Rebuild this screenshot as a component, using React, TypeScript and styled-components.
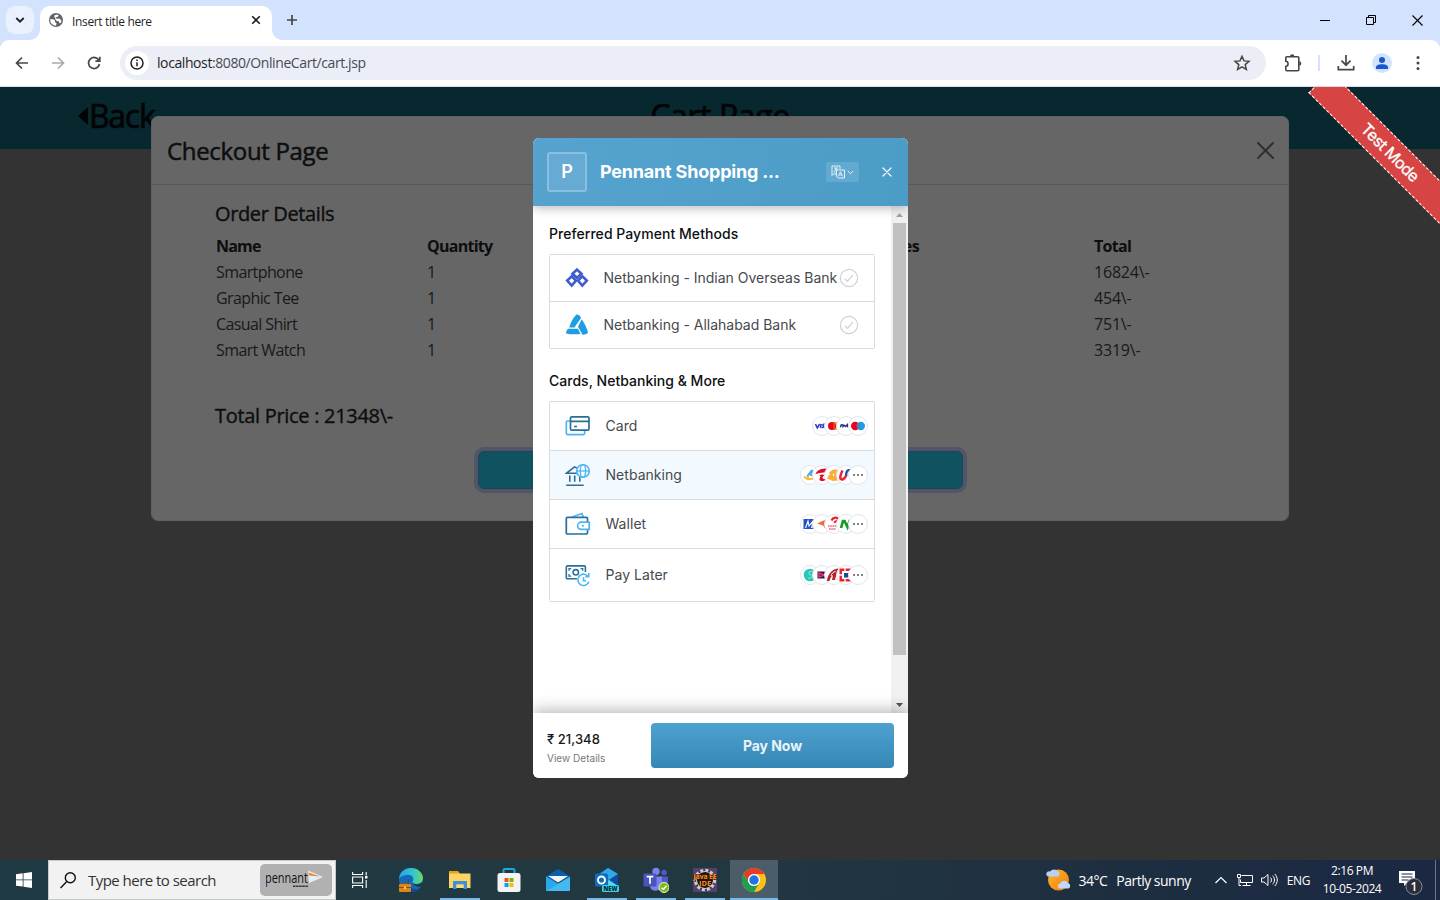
import React from "react";
import styled, { createGlobalStyle } from "styled-components";

const Global = createGlobalStyle`
  * { box-sizing: border-box; }
  html, body { margin: 0; padding: 0; overflow: hidden; }
  svg { display: block; flex: none; }
`;

const ui = `"Open Sans", "Noto Sans", sans-serif`;
const inter = `Inter, "Noto Sans", sans-serif`;

const Screen = styled.div`
  width: 1440px;
  height: 900px;
  display: flex;
  flex-direction: column;
  overflow: hidden;
  font-family: ${ui};
  background: #d3e3fd;
`;

/* Text whose tracking is tuned to the width of the system face */
const Label = styled.span<{ $size: number; $track?: number; $weight?: number; $color?: string; $stroke?: number }>`
  font-size: ${(p) => p.$size}px;
  letter-spacing: ${(p) => p.$track ?? 0}px;
  font-weight: ${(p) => p.$weight ?? 400};
  color: ${(p) => p.$color ?? "inherit"};
  -webkit-text-stroke: ${(p) => p.$stroke ?? 0}px currentColor;
  white-space: nowrap;
`;

/* ---------- Browser chrome ---------- */
const TabStrip = styled.header`
  height: 40px;
  flex: none;
  display: flex;
  align-items: flex-start;
  padding: 6px 0 0 6px;
`;
const TabSearch = styled.button`
  width: 28px;
  height: 28px;
  padding: 0;
  border: 0;
  border-radius: 9px;
  background: #e9f0fe;
  display: grid;
  place-items: center;
`;
const TabShape = styled.div`
  margin-left: 6px;
  width: 232px;
  height: 34px;
  display: flex;
  align-items: center;
  padding: 0 10px 6px 8px;
  border-radius: 10px 10px 0 0;
  background: #fff;
  color: #1f1f1f;
  position: relative;
  &::before, &::after {
    content: "";
    position: absolute;
    bottom: 0;
    width: 10px;
    height: 10px;
  }
  &::before { left: -10px; background: radial-gradient(circle at 0 0, transparent 9.5px, #fff 10px); }
  &::after { right: -10px; background: radial-gradient(circle at 100% 0, transparent 9.5px, #fff 10px); }
`;
const TabTitle = styled.div`
  flex: 1;
  margin-left: 8px;
  line-height: 16px;
  padding-top: 1px;
`;
const NewTab = styled.div`
  width: 28px;
  height: 28px;
  margin-left: 6px;
  display: grid;
  place-items: center;
`;
const WindowButtons = styled.div`
  margin-left: auto;
  display: flex;
  height: 28px;
`;
const WindowButton = styled.div`
  width: 46px;
  display: grid;
  place-items: center;
`;
const Toolbar = styled.div`
  height: 47px;
  flex: none;
  display: flex;
  align-items: center;
  background: #fff;
  border-radius: 9px 9px 0 0;
  border-bottom: 1px solid #d9dce1;
  padding-left: 4px;
`;
const ToolButton = styled.div<{ $w?: number }>`
  width: ${(p) => p.$w ?? 36}px;
  height: 34px;
  display: grid;
  place-items: center;
`;
const Omnibox = styled.div`
  margin-left: 8px;
  width: 1146px;
  height: 34px;
  border-radius: 17px;
  background: #ebeef7;
  display: flex;
  align-items: center;
  padding: 0 15px 0 5px;
`;
const SiteInfo = styled.div`
  width: 24px;
  height: 24px;
  border-radius: 50%;
  background: #fff;
  display: grid;
  place-items: center;
  margin-right: 8px;
`;
const Url = styled.div`
  flex: 1;
  line-height: 20px;
  padding-bottom: 1px;
`;
const Divider = styled.div`
  width: 2px;
  height: 16px;
  background: #d3e3fd;
  margin: 0 8px 0 6px;
`;
const Avatar = styled.div`
  width: 20px;
  height: 20px;
  border-radius: 50%;
  background: #d3e3fd;
  overflow: hidden;
  display: grid;
  place-items: center;
`;

/* ---------- Web page ---------- */
const Viewport = styled.main`
  position: relative;
  height: 773px;
  flex: none;
  background: #333;
  overflow: hidden;
`;
const PageBar = styled.div`
  height: 62px;
  background: #07282e;
  color: #030405;
  display: grid;
  grid-template-columns: 1fr auto 1fr;
  align-items: center;
  padding: 0 78px 5px;
`;
const BackLink = styled.div`
  display: flex;
  align-items: center;
`;
const CheckoutDialog = styled.section`
  position: absolute;
  left: 151px;
  top: 29px;
  width: 1138px;
  height: 405px;
  border-radius: 7px;
  background: #666;
  border: 1px solid #606060;
  color: #0d0e0f;
`;
const CheckoutHeader = styled.div`
  height: 68px;
  border-bottom: 1px solid #595959;
  padding: 0 14px 0 15px;
  display: flex;
  align-items: center;
  justify-content: space-between;
`;
const CheckoutBody = styled.div`
  padding: 17px 63px 0;
`;
const SubTitle = styled.div`
  line-height: 24px;
`;
const OrderGrid = styled.div`
  display: grid;
  grid-template-columns: 211px 449px 218px 1fr;
  grid-auto-rows: 26px;
  align-items: center;
  padding: 6px 0 0 1px;
  height: 177px;
`;
const PayButton = styled.button`
  display: block;
  width: 485px;
  height: 38px;
  margin: 22px auto 0;
  padding: 0;
  border: 1px solid #263e60;
  border-radius: 6px;
  background: #0f5260;
  box-shadow: 0 0 0 4px #4f5767;
`;
const Ribbon = styled.div`
  position: absolute;
  left: 1290px;
  top: 50px;
  width: 200px;
  height: 31px;
  transform: rotate(45deg);
  background: #d64444;
  border: 1px dashed #fff;
  display: grid;
  place-items: center;
  padding-bottom: 1px;
  font-family: ${inter};
`;

/* ---------- Payment dialog ---------- */
const PayDialog = styled.section`
  position: absolute;
  left: 533px;
  top: 51px;
  width: 375px;
  height: 640px;
  border-radius: 6px;
  background: #fff;
  overflow: hidden;
  display: flex;
  flex-direction: column;
  font-family: ${inter};
`;
const PayHeader = styled.div`
  height: 68px;
  flex: none;
  display: flex;
  align-items: center;
  padding: 0 16px 0 14px;
  background: linear-gradient(100deg, #56a3cf, #4c9cc8);
  box-shadow: 0 2px 10px rgba(0, 0, 0, 0.28);
  color: #fff;
  z-index: 1;
`;
const MerchantBadge = styled.div`
  width: 40px;
  height: 40px;
  border: 2px solid #8abfdf;
  border-radius: 3px;
  background: #66abd3;
  display: grid;
  place-items: center;
  margin-right: 13px;
  padding-bottom: 1px;
`;
const MerchantName = styled.div`
  padding-bottom: 2px;
`;
const LanguagePick = styled.div`
  width: 33px;
  height: 20px;
  border-radius: 2px;
  background: #63aad1;
  display: flex;
  align-items: center;
  justify-content: space-between;
  padding: 0 5px;
  margin-left: auto;
  margin-right: 23px;
`;
const PayMain = styled.div`
  height: 507px;
  flex: none;
  display: flex;
  position: relative;
`;
const PayContent = styled.div`
  flex: 1;
  min-width: 0;
  padding: 17px 16px 0;
`;
const SectionTitle = styled.div`
  height: 20px;
  line-height: 20px;
  color: #0d0f12;
`;
const Methods = styled.div<{ $gap: number }>`
  margin-top: 11px;
  margin-bottom: ${(p) => p.$gap}px;
  border: 1px solid #d8dadc;
  border-radius: 2px;
`;
const Method = styled.div<{ $h: number; $pad: string; $active?: boolean }>`
  height: ${(p) => p.$h}px;
  display: flex;
  align-items: center;
  padding: ${(p) => p.$pad};
  color: #45494e;
  background: ${(p) => (p.$active ? "#f3faff" : "#fff")};
  & + & { border-top: 1px solid #d8dadc; }
`;
const MethodName = styled.div`
  flex: 1;
  min-width: 0;
  white-space: nowrap;
  padding-bottom: 2px;
`;
const Stack = styled.div`
  display: flex;
`;
const Chip = styled.div`
  width: 20px;
  height: 20px;
  border-radius: 50%;
  border: 1px solid #e2e5ea;
  background: #fff;
  display: grid;
  place-items: center;
  position: relative;
  & + & { margin-left: -8px; }
`;
const ScrollTrack = styled.div`
  width: 17px;
  flex: none;
  background: #f1f1f1;
  display: flex;
  flex-direction: column;
  align-items: center;
`;
const ScrollArrow = styled.div`
  height: 17px;
  display: grid;
  place-items: center;
`;
const ScrollThumb = styled.div`
  width: 13px;
  height: 432px;
  background: #c1c1c1;
  margin-bottom: auto;
`;
const PayFooter = styled.div`
  height: 65px;
  display: flex;
  align-items: center;
  padding: 0 14px;
  background: #fff;
  box-shadow: 0 -3px 14px rgba(30, 45, 35, 0.32);
  z-index: 1;
`;
const Amount = styled.div`
  width: 104px;
  display: flex;
  flex-direction: column;
  padding-top: 2px;
`;
const AmountLine = styled.div<{ $lh: number }>`
  line-height: ${(p) => p.$lh}px;
`;
const PayNow = styled.button`
  width: 243px;
  height: 45px;
  border: 0;
  border-radius: 4px;
  background: linear-gradient(#4fa1cf, #3588b5);
  font-family: ${inter};
  display: grid;
  place-items: center;
`;

/* ---------- Taskbar ---------- */
const Taskbar = styled.footer`
  height: 40px;
  flex: none;
  display: flex;
  background: linear-gradient(90deg, #1f3a42, #223841 50%, #1f3040 72%, #1a2843);
  color: #fff;
`;
const Slot = styled.div<{ $w?: number; $open?: boolean; $active?: boolean }>`
  width: ${(p) => p.$w ?? 48}px;
  height: 40px;
  margin-right: 1px;
  display: grid;
  place-items: center;
  position: relative;
  background: ${(p) => (p.$active ? "#4b5d68" : "transparent")};
  &::after {
    content: "";
    position: absolute;
    bottom: 0;
    height: 2px;
    left: ${(p) => (p.$active ? 0 : 4)}px;
    right: ${(p) => (p.$active ? 0 : 4)}px;
    background: ${(p) => (p.$open || p.$active ? "#76b9ed" : "transparent")};
  }
`;
const StartButton = styled(Slot)`
  margin-right: 0;
`;
const SearchBox = styled.div`
  width: 288px;
  border: 1px solid #c5c9ca;
  background: #f2f2f2;
  display: flex;
  align-items: center;
  padding: 0 3px 0 11px;
`;
const SearchText = styled.div`
  flex: 1;
  margin-left: 11px;
`;
const BrandPill = styled.div`
  width: 72px;
  height: 32px;
  border-radius: 5px;
  background: #b1b1b1;
  display: grid;
  place-items: center;
`;
const Tray = styled.div`
  margin-left: auto;
  display: flex;
  align-items: center;
`;
const Gap = styled.div<{ $w: number }>`
  width: ${(p) => p.$w}px;
  flex: none;
`;
const Clock = styled.div`
  width: 60px;
  display: flex;
  flex-direction: column;
  align-items: center;
  line-height: 18px;
`;
const DesktopPeek = styled.div`
  width: 5px;
  height: 40px;
  border-left: 1px solid #6d7686;
`;

/* ---------- Drawings ---------- */
const Cross = ({ s, w, c }: { s: number; w: number; c: string }) => (
  <svg width={s} height={s} viewBox={`0 0 ${s} ${s}`} stroke={c} strokeWidth={w} strokeLinecap="round">
    <path d={`M1 1L${s - 1} ${s - 1}M${s - 1} 1L1 ${s - 1}`} />
  </svg>
);

const Check = () => (
  <svg width="20" height="20" viewBox="0 0 20 20" fill="none" stroke="#cfd1d3" strokeWidth="1.2">
    <circle cx="10" cy="10" r="8.6" />
    <path d="M5.8 10.6l2.6 2.8 5.6-6.6" />
  </svg>
);

const Globe = () => (
  <svg width="16" height="16" viewBox="0 0 16 16">
    <circle cx="8" cy="8" r="7" fill="#5f6368" />
    <path d="M2.3 7l3 .2 1.700 1.400v1.700l1.500.7-.4 2.700A5.700 5.700 0 0 1 2.300 7zM6.500 3.200l2.800-.8 1.300.9-.6 1.400-1.700.2-.4 1.300 1.400.6 2.200-.3 1.500 1.400.5 1.600-1.200 1.700-1-.3-.6-1.700-2.500-.5-1-1.600.3-1.300-1.300-.6z" fill="#fff" />
  </svg>
);

const OverseasLogo = () => (
  <svg width="24" height="24" viewBox="0 0 24 24" fill="none" stroke="#3e5cd0" strokeWidth="2.600">
    <path d="M12 3.600l4.500 4.200-4.500 4-4.500-4z" />
    <path d="M6.700 10.300l4.300 4.200-4.300 5-4.500-5z" />
    <path d="M17.300 10.300l4.500 4.200-4.500 5-4.300-5z" />
  </svg>
);
const AllahabadLogo = () => (
  <svg width="24" height="24" viewBox="0 0 24 24" fill="#1f9de2">
    <path d="M11.500 1.500c2.500 0 3.800 1.400 4.500 3.600l-6.600 9.500H4.200C5.500 10.500 7.500 5 11.500 1.500z" />
    <path d="M16.700 6.200c3 4 5.500 9.300 6.300 13.500-1.500 1.400-3.500 2-5.400 2l-4.600-8z" />
    <path d="M3 15.700h10l2.500 5.200c-4.500.7-10 .7-14.500-.5.1-2 .9-3.600 2-4.700z" />
  </svg>
);

const dark = "#2b6f97";
const light = "#4db5f5";
const CardIcon = () => (
  <svg width="26" height="24" viewBox="0 0 26 24" fill="none" strokeWidth="1.700">
    <path d="M5 7H2.600A1.300 1.300 0 0 0 1.300 8.300v11a1.300 1.300 0 0 0 1.300 1.300h15.800a1.300 1.300 0 0 0 1.300-1.300V17" stroke={light} />
    <rect x="5.500" y="2.800" width="18.500" height="13.400" rx="1.300" stroke={dark} />
    <path d="M5.500 7.300H24M9 12.500h3" stroke={dark} />
  </svg>
);
const BankIcon = () => (
  <svg width="26" height="24" viewBox="0 0 26 24" fill="none" strokeWidth="1.600">
    <path d="M12 5.100L9.600 3.900 1.300 10.300h11.500M4.800 12.500v6.300M9.700 12.500v6.300M14.800 13.800v5M1.200 22.200h17.500" stroke={dark} />
    <circle cx="18" cy="8" r="6.300" stroke={light} />
    <ellipse cx="18" cy="8" rx="2.700" ry="6.300" stroke={light} strokeWidth="1.300" />
    <path d="M11.700 8h12.600" stroke={light} strokeWidth="1.300" />
  </svg>
);
const WalletIcon = () => (
  <svg width="26" height="24" viewBox="0 0 26 24" fill="none" strokeWidth="1.700">
    <path d="M7 5l10-3.500 1.200 3.500" stroke={light} />
    <path d="M22.500 10V6.500a1.200 1.200 0 0 0-1.200-1.200H2.500a1.200 1.200 0 0 0-1.200 1.200v14.200A1.200 1.200 0 0 0 2.500 22h18.800a1.200 1.200 0 0 0 1.200-1.200v-3" stroke={dark} />
    <path d="M24.200 10.200h-8a3.600 3.600 0 0 0 0 7.200h8z" stroke={light} fill="#fff" />
    <path d="M17 13.800h1.800" stroke={light} />
  </svg>
);
const LaterIcon = () => (
  <svg width="26" height="24" viewBox="0 0 26 24" fill="none" strokeWidth="1.600">
    <path d="M12 15.800H2.500A1.200 1.200 0 0 1 1.300 14.600V4.100a1.200 1.200 0 0 1 1.200-1.200h16.700a1.200 1.200 0 0 1 1.200 1.200V9" stroke={dark} />
    <circle cx="10.800" cy="9.300" r="2.700" stroke={dark} />
    <path d="M4 7.700V5.600h2.200M15.500 5.600h2.200v2.100M4 11v2.100h2.200" stroke={dark} strokeWidth="1.300" />
    <path d="M23.600 14.200a5.700 5.700 0 1 0 .3 4.600M20.300 13.600h3.500v-3.500M18.500 14.300v3.400h2.500" stroke={light} />
  </svg>
);

const Logo = ({ children }: { children: React.ReactNode }) => (
  <svg width="16" height="16" viewBox="0 0 16 16">{children}</svg>
);
const logos: Record<string, React.ReactNode> = {
  visa: <Logo><path d="M1.500 6l1.800 4L5.700 6M7.200 6l-.7 4M10.800 6.300c-2-.6-2.500.7-1.400 1.500s.3 2.200-1.600 1.700M10.500 10l2.200-3.800.8 3.800" stroke="#2536c4" strokeWidth="1.500" fill="none" /></Logo>,
  master: <Logo><circle cx="10.500" cy="8" r="4" fill="#f79e1b" /><circle cx="6" cy="8" r="4" fill="#eb001b" /><path d="M8.200 4.700v6.600" stroke="#f0501a" strokeWidth="1.500" /></Logo>,
  rupay: <Logo><path d="M2.500 9.300l.8-2.500 2 .2-.2 1.500 1.300-1 1.300 1 1.700-2 .4 2 2-1.700 1 1.500 2-1.500" stroke="#28277e" strokeWidth="1.400" fill="none" /></Logo>,
  maestro: <Logo><circle cx="5.200" cy="8" r="4.200" fill="#eb001b" /><circle cx="10.800" cy="8" r="4.200" fill="#1a9fe0" /><path d="M8 4.900a4.200 4.200 0 0 1 0 6.200 4.200 4.200 0 0 1 0-6.200z" fill="#7866b8" /></Logo>,
  sbi: <Logo><path d="M5 9.500L10 3l-1.500 5 3.500 1M10 3l1 3" stroke="#45a8dd" strokeWidth="1.700" fill="none" /><path d="M2 9.700l4 2.600 7-1M6 12.300V9" stroke="#f6b52e" strokeWidth="1.700" fill="none" /></Logo>,
  axis: <Logo><path d="M1.500 7.200C2.500 4 6 1.600 11 1.500c4 0 3 3.500-1 4-3 .4-6 .7-8.500 1.700zM5 9c1.500-2 5-2 5-.8 0 1-2 1.500-1.500 2.500.5 1.300 2 1.600 4 1.500-2 2-6 2.500-7 .5C5 11 8 9 5 9z" fill="#df0a28" /></Logo>,
  gold: <Logo><path d="M3 5.500l4-3 5 .3v8.500l2 .2-1 1.800-6 .7-6-2.500 2-3.500 1-.5zM8 6.200L6.500 8l1.800 1.200z" fill="#faad3a" fillRule="evenodd" /></Logo>,
  union: <Logo><path d="M4.500 3.500c-2 4-3.500 8.500-.5 9 2.500 0 3.500-2.500 4.500-4.500" stroke="#e4253a" strokeWidth="2.500" fill="none" /><path d="M12.500 3.300c-3-.6-4.200.7-4.500 5.200" stroke="#18589d" strokeWidth="2.500" fill="none" /></Logo>,
  dots: <Logo><path d="M3.300 7.300h1.500v1.500H3.300zM7.300 7.300h1.500v1.500H7.300zM11.300 7.300h1.500v1.500h-1.500z" fill="#222" /></Logo>,
  mobi: <Logo><path d="M1.500 3h12v10h-12z" fill="#2450c7" /><path d="M3.500 12l2.500-7 1 5 4-5-1.500 7M12.500 5l-1.500 7" stroke="#fff" strokeWidth="1.100" fill="none" /></Logo>,
  pay: <Logo><path d="M3 7.500L13 3l-1.500 10L9 9.500z" fill="#f26a35" /></Logo>,
  airtel: <Logo><path d="M5.500 4.500C7 1 12 1 12 3.200c0 2-3 2-3.700 3.600" stroke="#ed1c35" strokeWidth="2.200" fill="none" /><path d="M2 10h10M3 13h7" stroke="#ea6b7b" strokeWidth="1.700" strokeDasharray="1.700 .5" /></Logo>,
  free: <Logo><path d="M3 12l2-7h1.500l3 6 2.500-7" stroke="#179b25" strokeWidth="2.700" fill="none" /></Logo>,
  simpl: <Logo><circle cx="8" cy="8" r="6.300" fill="#28c6b6" /><path d="M10.500 4.500C6.500 3.800 5.500 6.500 8 7.600s2.500 3.500-2 3.700" stroke="#bdeee8" strokeWidth=".8" fill="none" /></Logo>,
  lazy: <Logo><path d="M3.500 4.500h8.500v7H3.500z" fill="#29174a" /><path d="M5 6v4l5.500-2z" stroke="#f23675" strokeWidth="1.500" fill="none" /></Logo>,
  icici: <Logo><path d="M1 14C1.500 8 5 2.500 12 1.500l1.500 1.500c-2 3-4 6-4.500 10H6l1-5c-2 1.500-3 4-3.500 6z" fill="#b5242c" /><path d="M9.500 4.500c-2 .3-4 2-4.500 4.500" stroke="#fff" strokeWidth="1" fill="none" /><path d="M13.500 4l-2 9" stroke="#ee7b2e" strokeWidth="1.600" /></Logo>,
  hdfc: <Logo><path d="M1.500 1.500h13v13h-13z" fill="#ed232a" /><path d="M4 4h8v8H4z" fill="#fff" /><path d="M7 1v3M7 12v3M1 8h3M12 8h3" stroke="#fff" strokeWidth="1.300" /><path d="M6 6h4.500v4.500H6z" fill="#174c92" /></Logo>,
};

const Start = () => (
  <svg width="16" height="16" viewBox="0 0 16 16" fill="#fff">
    <path d="M0 2.300l6.700-1v6.200H0zM7.500 1.200L16 0v7.500H7.500zM0 8.300h6.700v6.300L0 13.700zM7.500 8.300H16V16l-8.500-1.200z" />
  </svg>
);
const Magnifier = () => (
  <svg width="17" height="17" viewBox="0 0 17 17" fill="none" stroke="#111" strokeWidth="1.400">
    <circle cx="10.300" cy="5.800" r="5" /><path d="M6.800 9.500L.5 16" />
  </svg>
);
const Pennant = () => (
  <svg width="60" height="22" viewBox="0 0 60 22">
    <path d="M42 1.500l15 6.500-14 6z" fill="#e0f0f4" />
    <path d="M42.500 3.500L54 7.500 43 6.500z" fill="#f58220" />
    <text x="-1" y="14" fontFamily="Open Sans, sans-serif" fontSize="14.500" textLength="43" lengthAdjust="spacingAndGlyphs" fill="#111">pennant</text>
    <path d="M27 17.200h15" stroke="#333" strokeWidth="1.500" strokeDasharray="2.500 .6" />
  </svg>
);
const TaskView = () => (
  <svg width="16" height="16" viewBox="0 0 16 16" fill="none" stroke="#fff" strokeWidth="1.100">
    <path d="M.6 0v2.500h10V0M.6 16v-2.500h10V16M.6 5h10v6H.6zM14.200 0v3.500M14.200 8v8" /><path d="M13 4h2.500v2.500H13z" fill="#fff" stroke="none" />
  </svg>
);
const Edge = () => (
  <svg width="26" height="26" viewBox="0 0 26 26">
    <defs>
      <linearGradient id="edgeTop" x1="0" x2="1"><stop offset="0" stopColor="#25a3e8" /><stop offset=".6" stopColor="#37c5ce" /><stop offset="1" stopColor="#6bdc5b" /></linearGradient>
    </defs>
    <circle cx="13" cy="13" r="12" fill="#1669b6" />
    <path d="M1 12C1.500 5 6.500 1 13 1c7 0 12 5 12 10 0 4.500-4 6-7 6-2.500 0-3.800-.8-3.500-2 2.500-4-1-8-6-7C5 8.300 2.500 9.500 1 12z" fill="url(#edgeTop)" />
    <path d="M12 11c-3 4-1 10 5 11 2.500.4 4.500-.5 6-2-2 3-5.500 5-9.500 5C8 25 6 17 12 11z" fill="#0d4f97" />
    <path d="M14.500 15.500c1 2 5.500 2.300 8.500.5l2-1-.5 3.500c-3 2.500-9.500 1-10-3z" fill="#213a42" />
    <rect x="1" y="17" width="12" height="8" rx="1" fill="#d9861c" /><path d="M1 20.500h12" stroke="#8e4c10" /><path d="M4.500 17v-1.500h5V17" fill="none" stroke="#8e4c10" /><path d="M6 19.500h2v2.500H6z" fill="#ffd34d" />
  </svg>
);
const Explorer = () => (
  <svg width="22" height="20" viewBox="0 0 22 20">
    <path d="M0 1h9l2 2.500V8H0z" fill="#e5a50e" /><path d="M0 3.500h21.500V18H0z" fill="#fdd367" />
    <path d="M4 19v-8h14v8h-3.500v-4.500h-7V19z" fill="#3b93d6" /><path d="M7.500 14.500h7V18h-7z" fill="#fcd97c" />
  </svg>
);
const Store = () => (
  <svg width="24" height="24" viewBox="0 0 24 24">
    <path d="M6.500 6V2.500A1.500 1.500 0 0 1 8 1h8a1.500 1.500 0 0 1 1.500 1.500V6" fill="none" stroke="#1ea7e1" strokeWidth="2" />
    <rect x=".5" y="5" width="23" height="19" rx="2.500" fill="#f3f3f3" />
    <path d="M7.500 10h4v4h-4z" fill="#f25022" /><path d="M12.500 10h4v4h-4z" fill="#7fba00" /><path d="M7.500 15h4v4h-4z" fill="#00a4ef" /><path d="M12.500 15h4v4h-4z" fill="#ffb900" />
  </svg>
);
const Mail = () => (
  <svg width="24" height="24" viewBox="0 0 24 24">
    <path d="M0 8.500L12 1l12 7.500V13H0z" fill="#0a5eae" />
    <path d="M0 8.500l12 7 12-7V23H0z" fill="#28a8ea" /><path d="M0 23l24-13.500V23z" fill="#45b8f0" /><path d="M2 8h20l-10 6.500z" fill="#f3f3f3" />
  </svg>
);
const Outlook = () => (
  <svg width="26" height="26" viewBox="0 0 26 26">
    <path d="M6 6l8-5 10 6v12H6z" fill="#1378c8" /><path d="M14 1l10 6-9 6-9-6z" fill="#32a9e7" /><path d="M15 13l9-6v12z" fill="#0c4da2" />
    <path d="M6 18l9-5 9 6H6z" fill="#57d5f7" />
    <rect x="1" y="6.500" width="13" height="13" rx="1.500" fill="#0f6cbd" />
    <circle cx="7.500" cy="13" r="3.500" fill="none" stroke="#fff" strokeWidth="1.900" />
    <rect x="8" y="18" width="17" height="7" rx="1.500" fill="#35d6e8" />
    <text x="9.500" y="24" fontFamily="Open Sans, sans-serif" fontWeight="800" fontSize="6.500" textLength="14" lengthAdjust="spacingAndGlyphs" fill="#09262e">NEW</text>
  </svg>
);
const Teams = () => (
  <svg width="26" height="26" viewBox="0 0 26 26">
    <circle cx="21" cy="5.500" r="2.800" fill="#5059c9" /><path d="M17 9.500h8v7a4.500 4.500 0 0 1-8 2z" fill="#5059c9" />
    <circle cx="13" cy="4.500" r="3.700" fill="#7b83eb" /><path d="M7 9.500h12V18a6.300 6.300 0 0 1-12 2z" fill="#7b83eb" />
    <rect x=".5" y="6.500" width="13" height="13" rx="1.300" fill="#4b53bc" />
    <path d="M3.700 9.700h6.600M7 9.700v7" stroke="#fff" strokeWidth="1.700" />
    <circle cx="21" cy="20.500" r="5" fill="#7fba14" stroke="#e8f3d9" /><path d="M18.500 20.700l1.800 1.800 3.200-3.700" stroke="#fff" strokeWidth="1.500" fill="none" />
  </svg>
);
const JavaIde = () => (
  <svg width="24" height="24" viewBox="0 0 24 24">
    <rect width="24" height="24" fill="#53406b" /><circle cx="12" cy="12" r="9.500" fill="#17141a" /><circle cx="12" cy="12" r="9.700" fill="none" stroke="#ccc" strokeWidth="3" strokeDasharray="3 2.080" /><circle cx="12" cy="12" r="8.500" fill="none" stroke="#ccc" />
    <path d="M0 6h24v5.500H0z" fill="#3a1d14" opacity=".7" />
    <text x="0.500" y="11" fontFamily="Open Sans, sans-serif" fontWeight="700" fontSize="7" textLength="23" lengthAdjust="spacingAndGlyphs" fill="#ff8a14">Java EE</text>
    <text x="6" y="17.500" fontFamily="Open Sans, sans-serif" fontWeight="700" fontSize="7" textLength="12" lengthAdjust="spacingAndGlyphs" fill="#ff8a14">IDE</text>
  </svg>
);
const Chrome = () => (
  <svg width="24" height="24" viewBox="0 0 24 24">
    <circle cx="12" cy="12" r="12" fill="#fbc116" />
    <path d="M1.600 6A12 12 0 0 1 22.400 6H12a6 6 0 0 0-5.200 9z" fill="#e33b2e" />
    <path d="M1.600 6A12 12 0 0 0 12 24l5.200-9A6 6 0 0 1 6.800 15z" fill="#1e9e52" />
    <circle cx="12" cy="12" r="6" fill="#fff" /><circle cx="12" cy="12" r="4.700" fill="#1a73e8" />
  </svg>
);
const Weather = () => (
  <svg width="26" height="24" viewBox="0 0 26 24">
    <defs><linearGradient id="sun" x1="0" y1="0" x2="1" y2="1"><stop offset="0" stopColor="#fdbb25" /><stop offset="1" stopColor="#ef7914" /></linearGradient></defs>
    <circle cx="12.500" cy="12" r="10.500" fill="url(#sun)" />
    <path d="M2 8.500h10a2.800 2.800 0 0 0 0-5A5 5 0 0 0 4 3.500a2.600 2.600 0 0 0-2 5z" fill="#bcd0f3" />
    <path d="M13 20.500h9.500a2.800 2.800 0 0 0 0-5.200 4.700 4.700 0 0 0-8.500.3 2.700 2.700 0 0 0-1 4.900z" fill="#c3d6f6" />
  </svg>
);

/* ---------- Data ---------- */
const orders = [
  ["Smartphone", "1", "16824\\-"],
  ["Graphic Tee", "1", "454\\-"],
  ["Casual Shirt", "1", "751\\-"],
  ["Smart Watch", "1", "3319\\-"],
];
const methods = [
  { name: "Card", icon: <CardIcon />, h: 48, chips: ["visa", "master", "rupay", "maestro"] },
  { name: "Netbanking", icon: <BankIcon />, h: 49, active: true, chips: ["sbi", "axis", "gold", "union", "dots"] },
  { name: "Wallet", icon: <WalletIcon />, h: 49, chips: ["mobi", "pay", "airtel", "free", "dots"] },
  { name: "Pay Later", icon: <LaterIcon />, h: 53, chips: ["simpl", "lazy", "icici", "hdfc", "dots"] },
];

const BrowserChrome = () => (
  <>
    <TabStrip>
      <TabSearch>
        <svg width="10" height="8" viewBox="0 0 10 8" fill="none" stroke="#1f1f1f" strokeWidth="1.800"><path d="M1.300 2l3.700 3.700L8.700 2" /></svg>
      </TabSearch>
      <TabShape>
        <Globe />
        <TabTitle><Label $size={12} $track={-0.35}>Insert title here</Label></TabTitle>
        <svg width="12" height="12" viewBox="0 0 12 12" stroke="#1f1f1f" strokeWidth="1.600"><path d="M2.200 2.200l7.600 7.600M9.800 2.200L2.200 9.800" /></svg>
      </TabShape>
      <NewTab>
        <svg width="12" height="12" viewBox="0 0 12 12" stroke="#474747" strokeWidth="1.700"><path d="M6 1v10M1 6h10" /></svg>
      </NewTab>
      <WindowButtons>
        <WindowButton><svg width="10" height="10" stroke="#000"><path d="M0 5.500h10" /></svg></WindowButton>
        <WindowButton><svg width="10" height="10" fill="none" stroke="#000"><path d="M.5 2.500h7v7h-7zM2.500 2.500v-2h7v7h-2" /></svg></WindowButton>
        <WindowButton><svg width="11" height="11" stroke="#000" strokeWidth="1.100"><path d="M.5.5l10 10M10.500.5l-10 10" /></svg></WindowButton>
      </WindowButtons>
    </TabStrip>
    <Toolbar>
      <ToolButton>
        <svg width="14" height="14" viewBox="0 0 14 14" fill="none" stroke="#474747" strokeWidth="1.700"><path d="M13 7H2M7 1.500L1.500 7 7 12.500" /></svg>
      </ToolButton>
      <ToolButton>
        <svg width="14" height="14" viewBox="0 0 14 14" fill="none" stroke="#aaa" strokeWidth="1.700"><path d="M1 7h11M7 1.500L12.500 7 7 12.500" /></svg>
      </ToolButton>
      <ToolButton>
        <svg width="14" height="14" viewBox="0 0 14 14" fill="none" stroke="#474747" strokeWidth="1.700"><path d="M12 4.500A5.500 5.500 0 1 0 12.500 8M12.800.8v4.400H8.400" /></svg>
      </ToolButton>
      <Omnibox>
        <SiteInfo>
          <svg width="14" height="14" viewBox="0 0 14 14" fill="none" stroke="#1f1f1f" strokeWidth="1.500"><circle cx="7" cy="7" r="6" /><path d="M7 6.300v4M7 3.500v1.500" /></svg>
        </SiteInfo>
        <Url>
          <Label $size={14} $track={-0.41} $color="#1f1f1f">localhost</Label>
          <Label $size={14} $track={-0.41} $color="#474b52">:8080/OnlineCart/cart.jsp</Label>
        </Url>
        <svg width="18" height="18" viewBox="0 0 18 18" fill="none" stroke="#474747" strokeWidth="1.500"><path d="M9 2.300l2 4.600 5 .4-3.800 3.300 1.200 4.900L9 12.900l-4.400 2.600 1.200-4.900L2 7.300l5-.4z" /></svg>
      </Omnibox>
      <Gap $w={8} />
      <ToolButton $w={38}>
        <svg width="18" height="18" viewBox="0 0 18 18" fill="none" stroke="#474747" strokeWidth="1.600"><path d="M1.800 3.800a1 1 0 0 1 1-1h11a1 1 0 0 1 1 1v12a1 1 0 0 1-1 1h-11a1 1 0 0 1-1-1v-3.300c3-.3 3-5 0-5.300z" /><path d="M6 2.300a2.200 2 0 0 1 4.400 0zM15.300 7.300a2 2.200 0 0 1 0 4.400z" fill="#474747" stroke="none" /></svg>
      </ToolButton>
      <Divider />
      <Gap $w={8} />
      <svg width="20" height="20" viewBox="0 0 20 20" fill="none" stroke="#474747" strokeWidth="1.700"><path d="M10 2v10M5.500 7.700L10 12.200l4.500-4.500M2.300 13v3.700h15.400V13" /></svg>
      <Gap $w={16} />
      <Avatar>
        <svg width="14" height="14" viewBox="0 0 14 14" fill="#1b57cc"><circle cx="7" cy="4" r="3" /><path d="M1 13v-1.500C1 9 4 8.300 7 8.300s6 .7 6 3.200V13z" /></svg>
      </Avatar>
      <Gap $w={24} />
      <svg width="4" height="16" viewBox="0 0 4 16" fill="#474747"><circle cx="2" cy="2.500" r="1.500" /><circle cx="2" cy="8" r="1.500" /><circle cx="2" cy="13.500" r="1.500" /></svg>
    </Toolbar>
  </>
);

const Checkout = () => (
  <CheckoutDialog>
    <CheckoutHeader>
      <Label $size={24} $track={-0.32} $stroke={0.5}>Checkout Page</Label>
      <Cross s={17} w={2} c="#303030" />
    </CheckoutHeader>
    <CheckoutBody>
      <SubTitle><Label $size={20} $track={-0.38} $stroke={0.4}>Order Details</Label></SubTitle>
      <OrderGrid>
        <Label $size={16} $track={-0.8} $weight={700}>Name</Label>
        <Label $size={16} $track={-0.75} $weight={700}>Quantity</Label>
        <Label $size={16} $track={-0.45} $weight={700}>Taxes</Label>
        <Label $size={16} $track={-0.7} $weight={700}>Total</Label>
        {orders.map(([name, qty, total]) => (
          <React.Fragment key={name}>
            <Label $size={16} $track={-0.6} $color="#17191a">{name}</Label>
            <Label $size={16} $track={-0.45} $color="#17191a">{qty}</Label>
            <span />
            <Label $size={16} $track={-0.2} $color="#17191a">{total}</Label>
          </React.Fragment>
        ))}
      </OrderGrid>
      <SubTitle><Label $size={20} $track={-0.3} $stroke={0.4}>Total Price : 21348\-</Label></SubTitle>
      <PayButton />
    </CheckoutBody>
  </CheckoutDialog>
);

const Payment = () => (
  <PayDialog>
    <PayHeader>
      <MerchantBadge><Label $size={18} $weight={600}>P</Label></MerchantBadge>
      <MerchantName><Label $size={18} $weight={700} $track={-0.2}>Pennant Shopping ...</Label></MerchantName>
      <LanguagePick>
        <svg width="14" height="14" viewBox="0 0 14 14" fill="none" stroke="#e4f1f9"><path d="M5 9H2.500L1 10.500V1h8v3M3 3h4M5 3v3M3.500 5.500L6 3.500M2.500 7h2" /><path d="M5.500 5h8v8h-6l-2-1.500z" /><path d="M7.500 11.300l2-4.600 2 4.600M8.200 9.800h2.600" /></svg>
        <svg width="7" height="5" viewBox="0 0 7 5" fill="none" stroke="#e4f1f9"><path d="M.8 1l2.700 2.700L6.200 1" /></svg>
      </LanguagePick>
      <Cross s={10} w={1.2} c="#fff" />
    </PayHeader>
    <PayMain>
      <PayContent>
        <SectionTitle><Label $size={14} $weight={500} $track={0.05}>Preferred Payment Methods</Label></SectionTitle>
        <Methods $gap={21}>
          {[
            { name: "Netbanking - Indian Overseas Bank", icon: <OverseasLogo />, h: 46 },
            { name: "Netbanking - Allahabad Bank", icon: <AllahabadLogo />, h: 47 },
          ].map((m) => (
            <Method key={m.name} $h={m.h} $pad="0 15px">
              {m.icon}
              <Gap $w={14.5} />
              <MethodName><Label $size={14} $track={-0.01}>{m.name}</Label></MethodName>
              <Check />
            </Method>
          ))}
        </Methods>
        <SectionTitle><Label $size={14} $weight={500} $track={0.02}>Cards, Netbanking &amp; More</Label></SectionTitle>
        <Methods $gap={0}>
          {methods.map((m) => (
            <Method key={m.name} $h={m.h} $active={m.active} $pad="0 6px 0 15px">
              {m.icon}
              <Gap $w={14.5} />
              <MethodName><Label $size={14} $track={0.04}>{m.name}</Label></MethodName>
              <Stack>{m.chips.map((c) => <Chip key={c}>{logos[c]}</Chip>)}</Stack>
            </Method>
          ))}
        </Methods>
      </PayContent>
      <ScrollTrack>
        <ScrollArrow><svg width="7" height="4" fill="#a3a3a3"><path d="M0 4l3.500-4L7 4z" /></svg></ScrollArrow>
        <ScrollThumb />
        <ScrollArrow><svg width="7" height="4" fill="#505050"><path d="M0 0l3.500 4L7 0z" /></svg></ScrollArrow>
      </ScrollTrack>
    </PayMain>
    <PayFooter>
      <Amount>
        <AmountLine $lh={19}><Label $size={13} $weight={500} $track={0.05} $color="#16181b">₹ 21,348</Label></AmountLine>
        <AmountLine $lh={14}><Label $size={10} $track={0.02} $color="#777">View Details</Label></AmountLine>
      </Amount>
      <PayNow><Label $size={14} $weight={700} $track={-0.05} $color="#e9f3f9">Pay Now</Label></PayNow>
    </PayFooter>
  </PayDialog>
);

const SystemBar = () => (
  <Taskbar>
    <StartButton><Start /></StartButton>
    <SearchBox>
      <Magnifier />
      <SearchText><Label $size={15} $track={-0.53} $color="#333">Type here to search</Label></SearchText>
      <BrandPill><Pennant /></BrandPill>
    </SearchBox>
    <Slot><TaskView /></Slot>
    <Gap $w={2} />
    <Slot><Edge /></Slot>
    <Slot $open><Explorer /></Slot>
    <Slot><Store /></Slot>
    <Slot><Mail /></Slot>
    <Slot $open><Outlook /></Slot>
    <Slot $open><Teams /></Slot>
    <Slot $open><JavaIde /></Slot>
    <Slot $active><Chrome /></Slot>
    <Tray>
      <Weather />
      <Gap $w={6} />
      <Label $size={14} $track={-0.5}>34°C</Label>
      <Gap $w={9} />
      <Label $size={14} $track={-0.5}>Partly sunny</Label>
      <Gap $w={24} />
      <svg width="12" height="8" viewBox="0 0 12 8" fill="none" stroke="#fff" strokeWidth="1.200"><path d="M.5 7L6 1.500 11.500 7" /></svg>
      <Gap $w={10} />
      <svg width="16" height="14" viewBox="0 0 16 14" fill="none" stroke="#fff"><path d="M4.500 2.500h11v7H3.500v-3M9.500 9.500v3M5.500 12.500h8M.5 1.500h3v3h-3zM2 4.500v8h2" /></svg>
      <Gap $w={8} />
      <svg width="17" height="14" viewBox="0 0 17 14" fill="none" stroke="#fff"><path d="M.5 5v4h2.500l4 3.500V1.500L3 5zM9.500 4.500c1.300 1.500 1.300 3.500 0 5M11.700 2.700c2.400 2.500 2.400 6.100 0 8.600M13.800 1c3.300 3.500 3.300 8.500 0 12" /></svg>
      <Gap $w={9} />
      <Label $size={12} $track={-0.4}>ENG</Label>
      <Gap $w={12} />
      <Clock>
        <Label $size={12} $track={-0.4}>2:16 PM</Label>
        <Label $size={12} $track={-0.4}>10-05-2024</Label>
      </Clock>
      <Gap $w={17} />
      <svg width="25" height="32" viewBox="0 -3 25 32">
        <path d="M0 4h16v12H8l-3 3v-3H0z" fill="#fff" /><path d="M2.500 7h11M2.500 10h11M2.500 13h7" stroke="#1a2843" />
        <circle cx="15" cy="19.500" r="8" fill="#2a2f38" stroke="#8a909a" />
        <text x="15" y="23.800" textAnchor="middle" fontFamily="Open Sans, sans-serif" fontSize="12" fontWeight="600" fill="#fff">1</text>
      </svg>
      <Gap $w={11} />
      <DesktopPeek />
    </Tray>
  </Taskbar>
);

export default function App() {
  return (
    <Screen>
      <Global />
      <BrowserChrome />
      <Viewport>
        <PageBar>
          <BackLink>
            <svg width="10" height="18" viewBox="0 0 10 18" fill="#030405"><path d="M10 0v18L0 9z" /></svg>
            <Gap $w={1} />
            <Label $size={32} $track={-1.3} $stroke={0.7}>Back</Label>
          </BackLink>
          <Label $size={32} $track={-0.4} $stroke={0.7}>Cart Page</Label>
        </PageBar>
        <Checkout />
        <Ribbon><Label $size={16} $track={-0.6} $color="#fff" $stroke={0.3}>Test Mode</Label></Ribbon>
        <Payment />
      </Viewport>
      <SystemBar />
    </Screen>
  );
}
